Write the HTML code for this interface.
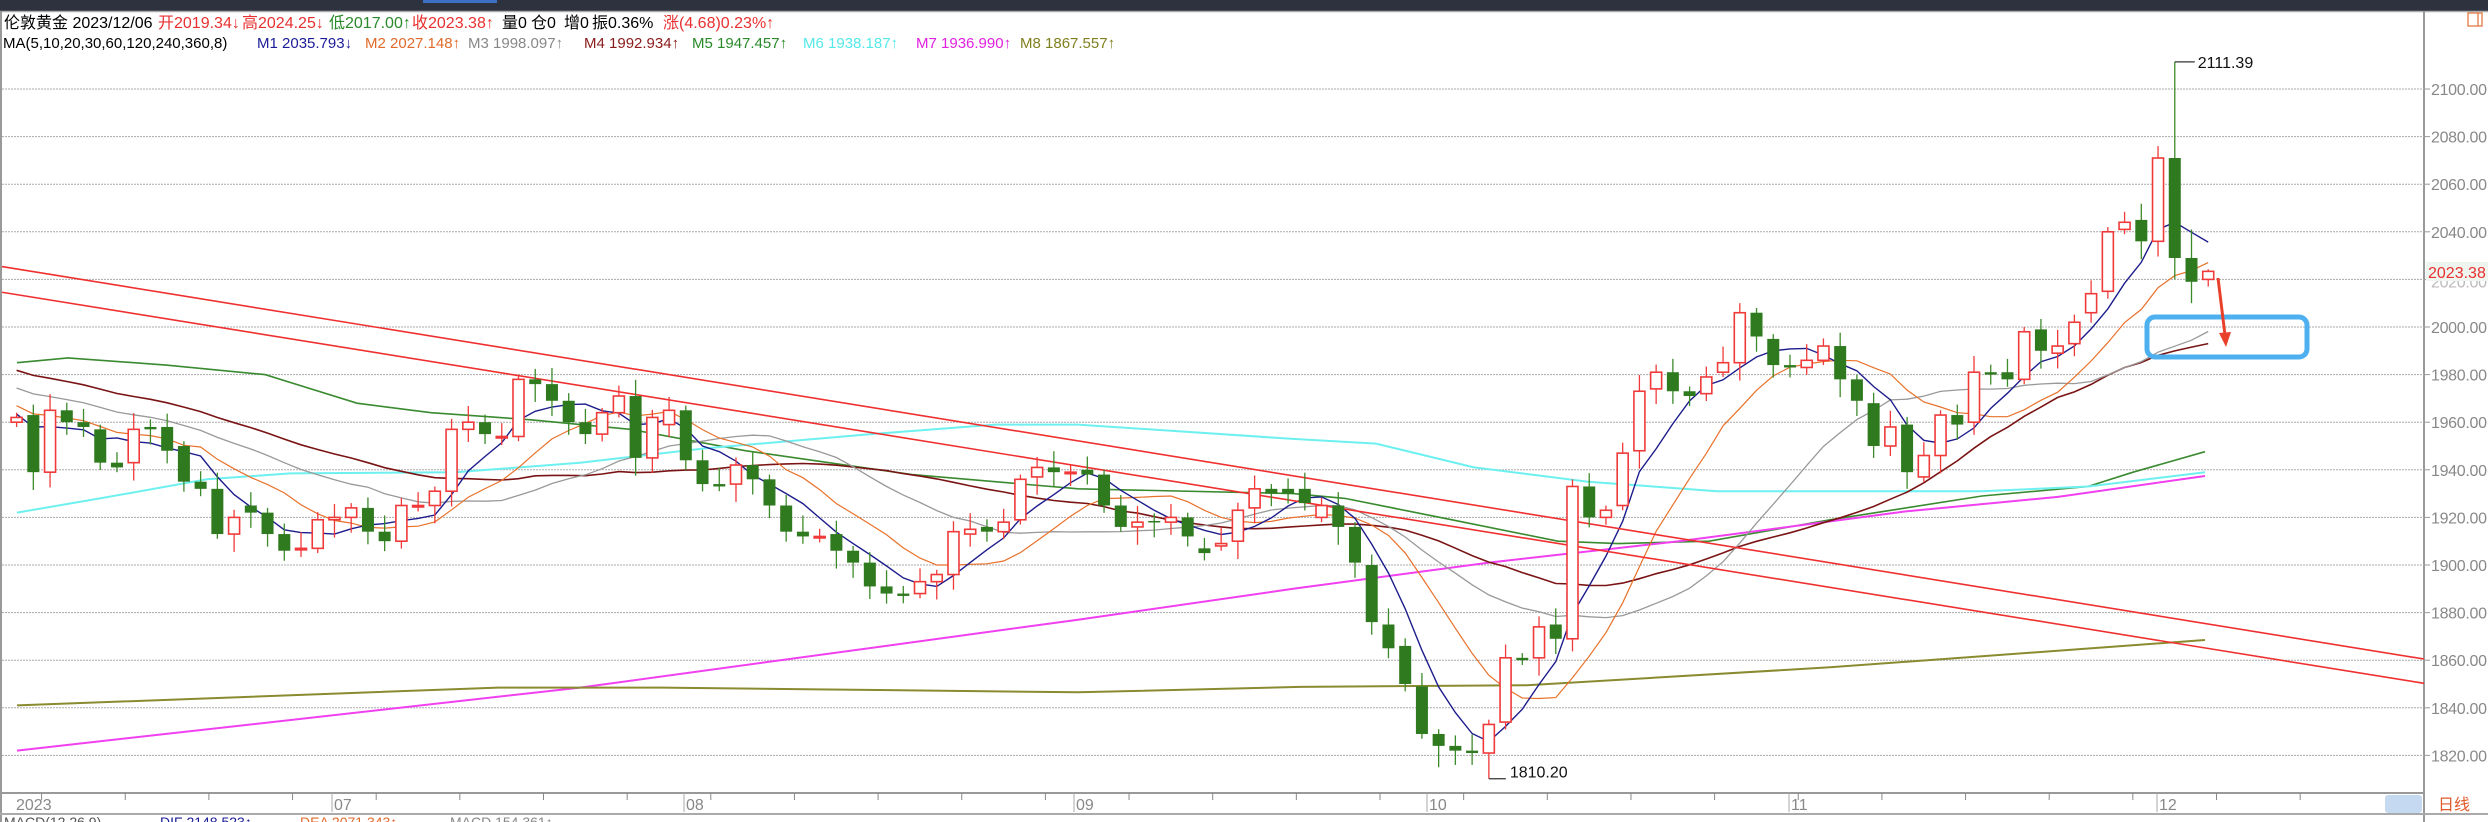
<!DOCTYPE html>
<html><head><meta charset="utf-8">
<style>
html,body{margin:0;padding:0;background:#fff;width:2488px;height:822px;overflow:hidden}
svg{display:block;font-family:"Liberation Sans","Noto Sans CJK SC",sans-serif}
</style></head>
<body>
<svg id="c" width="2488" height="822" viewBox="0 0 2488 822" xmlns="http://www.w3.org/2000/svg">
<rect x="0" y="0" width="2488" height="11" fill="#2e323f"/>
<rect x="423" y="0" width="74" height="3" fill="#3d6fc4"/>
<line x1="0" y1="11.5" x2="2488" y2="11.5" stroke="#aaa" stroke-width="1.5"/>
<line x1="1" y1="11" x2="1" y2="822" stroke="#999" stroke-width="2"/>
<line x1="2424" y1="11" x2="2424" y2="822" stroke="#999" stroke-width="2"/>
<rect x="2468" y="13" width="14" height="13" fill="none" stroke="#e07a40" stroke-width="1.3"/>
<line x1="2478" y1="13" x2="2478" y2="26" stroke="#e07a40" stroke-width="1.3"/>
<text y="28" font-size="16">
<tspan x="4" fill="#000">伦敦黄金 2023/12/06</tspan>
<tspan x="158" fill="#e83030">开2019.34↓</tspan>
<tspan x="242" fill="#e83030">高2024.25↓</tspan>
<tspan x="329" fill="#2a8a2a">低2017.00↑</tspan>
<tspan x="412" fill="#e83030">收2023.38↑</tspan>
<tspan x="502" fill="#000">量0</tspan>
<tspan x="531" fill="#000">仓0</tspan>
<tspan x="564" fill="#000">增0</tspan>
<tspan x="592" fill="#000">振0.36%</tspan>
<tspan x="663" fill="#e83030">涨(4.68)0.23%↑</tspan>
</text>
<text y="48" font-size="15">
<tspan x="3" fill="#000">MA(5,10,20,30,60,120,240,360,8)</tspan>
<tspan x="257" fill="#1c1c9a">M1 2035.793↓</tspan>
<tspan x="365" fill="#e06a2a">M2 2027.148↑</tspan>
<tspan x="468" fill="#888">M3 1998.097↑</tspan>
<tspan x="584" fill="#8b1a1a">M4 1992.934↑</tspan>
<tspan x="692" fill="#2a8a2a">M5 1947.457↑</tspan>
<tspan x="803" fill="#55e8e8">M6 1938.187↑</tspan>
<tspan x="916" fill="#e020e0">M7 1936.990↑</tspan>
<tspan x="1020" fill="#808020">M8 1867.557↑</tspan>
</text>
<g id="grid"></g>
<g id="ma"></g>
<g id="tl"></g>
<g id="cd"></g>
<g id="ax"></g>
<!-- time axis -->
<line x1="0" y1="793" x2="2424" y2="793" stroke="#999" stroke-width="2"/>
<line x1="0" y1="814" x2="2488" y2="814" stroke="#aaa" stroke-width="2"/>
<g id="tk"></g>
<g font-size="16" fill="#888">
<text x="16" y="810">2023</text><text x="334" y="810">07</text><text x="686" y="810">08</text>
<text x="1076" y="810">09</text><text x="1429" y="810">10</text><text x="1791" y="810">11</text><text x="2159" y="810">12</text>
</g>
<rect x="2385" y="795" width="37" height="18" rx="3" fill="#c5d9f1"/>
<text x="2438" y="810" font-size="16" fill="#e05a2a">日线</text>
<text y="827" font-size="14" fill="#555"><tspan x="4">MACD(12,26,9)</tspan><tspan x="160" fill="#1c1c9a">DIF 2148.523↑</tspan><tspan x="300" fill="#e06a2a">DEA 2071.343↑</tspan><tspan x="450" fill="#888">MACD 154.361↑</tspan></text>
<!-- annotations -->
<rect x="2147" y="317" width="160" height="40" rx="8" fill="none" stroke="#4fb0f0" stroke-width="5"/>
<line x1="2218" y1="278" x2="2225" y2="335" stroke="#e8402a" stroke-width="3"/>
<polygon points="2219,333 2231,332 2226,347" fill="#e8402a"/>
<rect x="2426" y="262" width="62" height="19" fill="#eef5ee"/>
<text x="2428" y="278" font-size="16" fill="#e83030">2023.38</text>
</svg>
<script>
(function(){
var NS="http://www.w3.org/2000/svg";
function Y(p){return 327-(p-2000)*2.38;}
function X(i){return 16.6+i*16.73;}
function el(g,t,a){var e=document.createElementNS(NS,t);for(var k in a)e.setAttribute(k,a[k]);document.getElementById(g).appendChild(e);return e;}
// grid
for(var p=1820;p<=2100;p+=20){var y=Y(p);
el('grid','line',{x1:2,y1:y,x2:2424,y2:y,stroke:'#aaa','stroke-width':1,'stroke-dasharray':'2,1'});
el('ax','line',{x1:2424,y1:y,x2:2430,y2:y,stroke:'#999','stroke-width':1});
if(p!=2020){var t=el('ax','text',{x:2431,y:y+6,'font-size':16,fill:'#888',textLength:56});t.textContent=p.toFixed(2);}
}
var t2=el('ax','text',{x:2431,y:Y(2020)+8,'font-size':16,fill:'#bbb',textLength:56});t2.textContent='2020.00';
// candles [o,c]
var D=[[1960,1962],[1963,1939],[1939,1965],[1965,1960],[1960,1958],[1957,1943],[1943,1941],[1943,1957],[1958,1957],[1958,1948],
[1950,1935],[1935,1932],[1932,1913],[1913,1920],[1925,1922],[1922,1913],[1913,1906],[1906.5,1907],[1907,1919],[1919,1920],
[1920,1924],[1924,1914],[1914,1910],[1910,1925],[1924.5,1925],[1925,1931],[1931,1957],[1957,1960],[1960,1955],[1953.5,1954],
[1954,1978],[1978,1976],[1976,1969],[1969,1960],[1960,1955],[1955,1964],[1964,1971],[1971,1945],[1945,1962],[1959,1965],
[1965,1944],[1944,1934],[1934,1933],[1934,1942],[1942,1936],[1936,1925],[1925,1914],[1914,1912],[1911.5,1912],[1913,1906],
[1906,1901],[1901,1891],[1891,1888],[1888,1887],[1888,1893],[1893,1896],[1896,1914],[1913,1915],[1916,1914],[1914,1918],
[1919,1936],[1937,1941],[1941,1939],[1938.5,1939],[1940,1938],[1938,1925],[1925,1916],[1916,1918],[1918.5,1918],[1918,1920],
[1920,1912],[1907,1905],[1908,1909],[1910,1923],[1924,1932],[1932,1930],[1932,1930],[1932,1926],[1920,1925],[1925,1916],
[1916,1901],[1900,1876],[1875,1865],[1866,1850],[1849,1829],[1829,1824],[1824,1822],[1822,1821],[1821,1833],[1834,1861],
[1861,1860],[1861,1874],[1875,1869],[1869,1933],[1933,1920],[1920,1923],[1925,1947],[1948,1973],[1974,1981],[1981,1973],
[1973,1971],[1972,1979],[1981,1985],[1985,2006],[2006,1996],[1995,1984],[1984,1983],[1983,1986],[1986,1992],[1992,1978],
[1978,1969],[1968,1950],[1950,1958],[1959,1939],[1937,1946],[1946,1963],[1963,1959],[1960,1981],[1981,1980],[1981,1978],
[1978,1998],[1999,1990],[1989,1992],[1993,2002],[2006,2014],[2015,2040],[2041,2044],[2045,2036],[2036,2071],[2071,2029],
[2029,2019],[2020,2023.38]];
var SH={128:2076,129:2111.39,130:2041,131:2024.25,103:2010,104:2008,93:1936,88:1835};
var SL={88:1810.2,129:2020,130:2010,131:2017,111:1945,113:1932,87:1816,86:1816,85:1815};
var closes=[];
for(var i=0;i<D.length;i++){
var o=D[i][0],c=D[i][1],up=c>=o,x=X(i);
var hi=SH[i]||Math.max(o,c)+2+((i*7)%5)*1.2;
var lo=SL[i]||Math.min(o,c)-2-((i*11)%6)*1.1;
var col=up?'#f03a3a':'#2f7a1f';
el('cd','line',{x1:x,y1:Y(hi),x2:x,y2:Y(lo),stroke:up?'#f03a3a':'#3d8a2a','stroke-width':1.3});
var t=Y(Math.max(o,c)),b=Y(Math.min(o,c));if(b-t<1.5){b=t+1.5;}
if(up)el('cd','rect',{x:x-5.5,y:t,width:11,height:b-t,fill:'#fff',stroke:col,'stroke-width':1.6});
else el('cd','rect',{x:x-6,y:t,width:12,height:b-t,fill:col});
closes.push(c);}
// labels
el('cd','polyline',{points:X(129)+','+Y(2111.39)+' '+(X(129)+20)+','+Y(2111.39),fill:'none',stroke:'#333','stroke-width':1.2});
var a=el('cd','text',{x:X(129)+23,y:Y(2111.39)+6,'font-size':16,fill:'#111'});a.textContent='2111.39';
el('cd','polyline',{points:X(88)+','+Y(1810.2)+' '+(X(88)+17)+','+Y(1810.2),fill:'none',stroke:'#333','stroke-width':1.2});
var b2=el('cd','text',{x:X(88)+21,y:Y(1810.2)-1,'font-size':16,fill:'#111'});b2.textContent='1810.20';
// MA computed
var pre=[];for(var k=0;k<30;k++)pre.push(2005-k*1.5);
var all=pre.concat(closes);
function ma(n,color,w){var pts=[];for(var i=0;i<closes.length;i++){var j=i+30,s=0;for(var q=0;q<n;q++)s+=all[j-q];pts.push(X(i).toFixed(1)+','+Y(s/n).toFixed(1));}
el('ma','polyline',{points:pts.join(' '),fill:'none',stroke:color,'stroke-width':w});}
function man(P,color,w){el('ma','polyline',{points:P.map(function(p){return p[0]+','+Y(p[1]).toFixed(1)}).join(' '),fill:'none',stroke:color,'stroke-width':w});}
man([[17,1985],[68,1987],[166,1984],[265,1980],[357,1968],[431,1964],[531,1961],[630,1957],[746,1948],[829,1943],[912,1938],[1078,1932],[1293,1930],[1345,1928],[1452,1919],[1558,1910],[1618,1909],[1709,1910],[1830,1919],[1982,1929],[2088,1933],[2133,1939],[2205,1947.6]],'#3a8a30',1.6);
man([[17,1922],[100,1928],[207,1936],[290,1938.5],[456,1939],[580,1943],[705,1949],[871,1955],[995,1959],[1078,1959],[1293,1953],[1376,1951],[1474,1941],[1588,1935],[1717,1931],[1982,1931],[2088,1933],[2205,1939]],'#6ef0f0',2);
man([[17,1822],[580,1848.5],[1078,1877],[1293,1890],[1489,1901],[1679,1910],[1906,1922.5],[2058,1928.6],[2205,1937.4]],'#f040f0',2);
man([[17,1841],[498,1848.5],[663,1848.5],[829,1847.7],[1078,1846.5],[1300,1848.8],[1527,1849.5],[1830,1857],[2205,1868.5]],'#8a8a30',2);
ma(30,'#7a1414',1.6);ma(20,'#999',1.3);ma(10,'#e8712a',1.2);ma(5,'#1c1c8c',1.4);
// trend lines
el('tl','line',{x1:2,y1:Y(2025.4),x2:2424,y2:Y(1860.5),stroke:'#f03030','stroke-width':1.6});
el('tl','line',{x1:2,y1:Y(2014.6),x2:2424,y2:Y(1850.3),stroke:'#f03030','stroke-width':1.6});
// ticks
for(var i=0;i<140;i+=5){var x=X(i)+25;if(x<2380)el('tk','line',{x1:x,y1:793,x2:x,y2:800,stroke:'#888','stroke-width':1});}
[332,684,1074,1427,1789,2157].forEach(function(x){el('tk','line',{x1:x,y1:793,x2:x,y2:812,stroke:'#aaa','stroke-width':1});});
})();
</script>
</body></html>
